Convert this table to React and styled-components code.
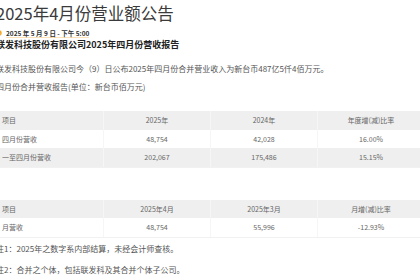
import React from 'react';
import styled, { createGlobalStyle } from 'styled-components';

const Global = createGlobalStyle`
  html, body { margin: 0; padding: 0; background: #fff; overflow: hidden; }
  body { font-family: "Noto Sans CJK SC", "Noto Sans", sans-serif; }
`;

const Page = styled.div`
  margin-left: -4px;
  width: 428px;
  padding-top: 2px;
`;

const Title = styled.h1`
  margin: 0;
  font-size: 16.5px;
  font-weight: 400;
  line-height: 22px;
  color: #3a3a3a;
`;

const DateRow = styled.div`
  display: flex;
  align-items: center;
  gap: 4px;
  margin-top: 4px;
  height: 10px;
`;

const DateText = styled.span`
  font-size: 6.5px;
  font-weight: 700;
  color: #333;
  line-height: 9px;
  box-shadow: inset 0 -1px 0 #fbe1b5;
`;

const Subtitle = styled.h2`
  margin: 1px 0 0;
  font-size: 9px;
  font-weight: 700;
  line-height: 12px;
  color: #222;
`;

const Para = styled.p`
  margin: ${(p) => p.$mt || 0}px 0 0;
  font-size: 8px;
  line-height: 12px;
  color: #555;
`;

const Table = styled.div`
  margin-top: ${(p) => p.$mt}px;
  display: grid;
  grid-template-columns: repeat(4, 107px);
  border-bottom: 1px solid #f1f1f1;
`;

const Cell = styled.div`
  height: 18.5px;
  display: flex;
  align-items: center;
  justify-content: ${(p) => (p.$first ? 'flex-start' : 'center')};
  padding-left: ${(p) => (p.$first ? '6px' : '0')};
  font-size: 7px;
  color: #666;
  background: ${(p) => (p.$shade ? '#efefef' : '#fff')};
  border-left: ${(p) => (p.$first ? 'none' : '1px solid #f6f6f6')};
`;

const ClockIcon = () => (
  <svg width="6" height="6" viewBox="0 0 12 12">
    <circle cx="6" cy="6" r="5.5" fill="#f5a623" />
    <path d="M6 3v3.2l2 1.2" stroke="#fff" strokeWidth="1.3" fill="none" strokeLinecap="round" />
  </svg>
);

const DataTable = ({ rows, mt }) => (
  <Table $mt={mt}>
    {rows.map((row, ri) =>
      row.map((c, ci) => (
        <Cell key={`${ri}-${ci}`} $first={ci === 0} $shade={ri % 2 === 0}>
          {c}
        </Cell>
      ))
    )}
  </Table>
);

export default function App() {
  return (
    <>
      <Global />
      <Page>
        <Title>2025年4月份营业额公告</Title>
        <DateRow>
          <ClockIcon />
          <DateText>2025 年 5 月 9 日 - 下午 5:00</DateText>
        </DateRow>
        <Subtitle>联发科技股份有限公司2025年四月份营收报告</Subtitle>
        <Para $mt={12}>联发科技股份有限公司今（9）日公布2025年四月份合并营业收入为新台币487亿5仟4佰万元。</Para>
        <Para $mt={6}>四月份合并营收报告(单位：新台币佰万元)</Para>
        <DataTable
          mt={18}
          rows={[
            ['项目', '2025年', '2024年', '年度增(减)比率'],
            ['四月份营收', '48,754', '42,028', '16.00%'],
            ['一至四月份营收', '202,067', '175,486', '15.15%'],
          ]}
        />
        <DataTable
          mt={32}
          rows={[
            ['项目', '2025年4月', '2025年3月', '月增(减)比率'],
            ['月营收', '48,754', '55,996', '-12.93%'],
          ]}
        />
        <Para $mt={5}>注1：2025年之数字系内部结算，未经会计师查核。</Para>
        <Para $mt={9}>注2：合并之个体，包括联发科及其合并个体子公司。</Para>
      </Page>
    </>
  );
}
